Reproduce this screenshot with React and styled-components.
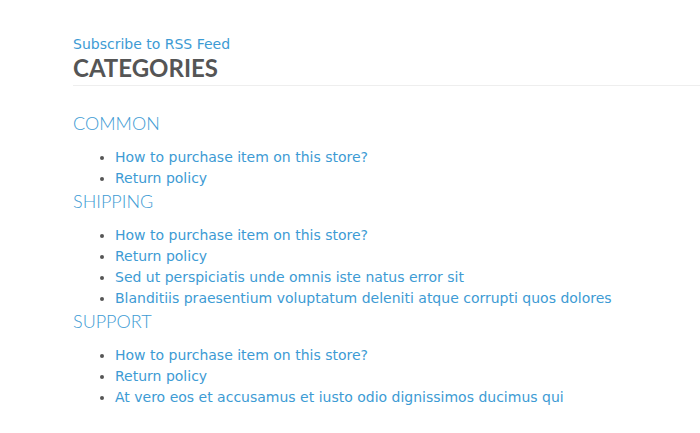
import React from "react";
import styled, { createGlobalStyle } from "styled-components";

const Global = createGlobalStyle`
  html, body { margin: 0; padding: 0; background: #fff; }
  body { font-family: "DejaVu Sans", Verdana, sans-serif; }
`;

const Page = styled.div`
  padding: 35px 0 0 73px;
  width: 627px;
  overflow: hidden;
`;

const RssLink = styled.a`
  display: block;
  color: #3d9bd4;
  font-size: 14px;
  line-height: 18px;
  text-decoration: none;
`;

const Title = styled.h2`
  margin: 0;
  font-family: "Lato", "Open Sans", sans-serif;
  font-weight: 700;
  font-size: 24px;
  line-height: 30px;
  color: #555;
  padding-bottom: 2px;
  border-bottom: 1px solid #eee;
  margin-right: -20px;
`;

const Body = styled.div`
  padding-top: 26px;
`;

const CatHeading = styled.h3`
  margin: 0 0 13px;
  font-family: "Lato", "Open Sans", sans-serif;
  font-weight: 300;
  font-size: 18px;
  line-height: 22px;
  color: #3d9bd4;
`;

const List = styled.ul`
  margin: 0 0 1px;
  padding: 0 0 0 42px;
  color: #555;
  font-size: 14px;
  line-height: 21px;
`;

const Item = styled.li`
  a { color: #3d9bd4; text-decoration: none; }
`;

const data = [
  { name: "COMMON", items: ["How to purchase item on this store?", "Return policy"] },
  {
    name: "SHIPPING",
    items: [
      "How to purchase item on this store?",
      "Return policy",
      "Sed ut perspiciatis unde omnis iste natus error sit",
      "Blanditiis praesentium voluptatum deleniti atque corrupti quos dolores",
    ],
  },
  {
    name: "SUPPORT",
    items: [
      "How to purchase item on this store?",
      "Return policy",
      "At vero eos et accusamus et iusto odio dignissimos ducimus qui",
    ],
  },
];

export default function App() {
  return (
    <>
      <Global />
      <Page>
        <RssLink href="#">Subscribe to RSS Feed</RssLink>
        <Title>CATEGORIES</Title>
        <Body>
          {data.map((c) => (
            <div key={c.name}>
              <CatHeading>{c.name}</CatHeading>
              <List>
                {c.items.map((t, i) => (
                  <Item key={i}><a href="#">{t}</a></Item>
                ))}
              </List>
            </div>
          ))}
        </Body>
      </Page>
    </>
  );
}
